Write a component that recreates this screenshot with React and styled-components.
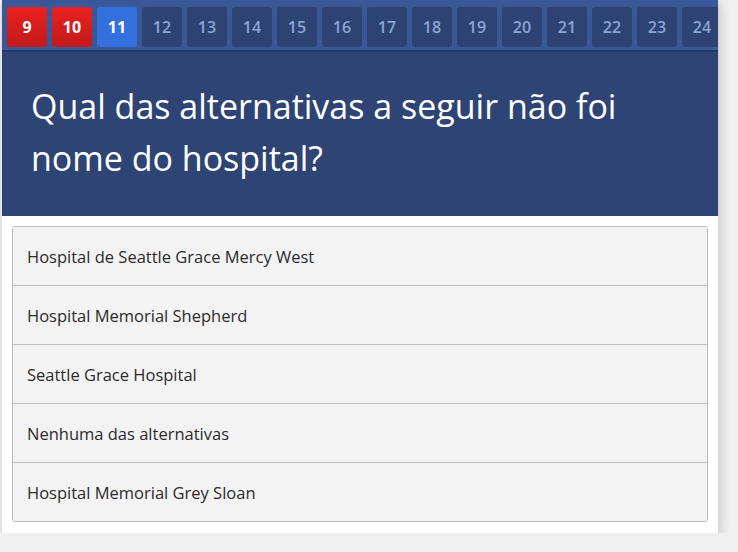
import React from 'react';
import styled, { createGlobalStyle } from 'styled-components';

const GlobalStyle = createGlobalStyle`
	body {
		margin: 0;
		background: #efefef;
		font-family: "Open Sans", "Noto Sans", sans-serif;
	}
`

const Card = styled.div`
	width: 716px;
	margin-left: 2px;
	background: #fff;
	box-shadow: 2px 3px 10px rgba(0, 0, 0, 0.18);
	padding-bottom: 11px;
	overflow: hidden;
`

const Nav = styled.div`
	display: flex;
	gap: 5px;
	padding: 7px 0 3px 5px;
	background: #3a5898;
	border-top: 2px solid #4a69a8;
	border-bottom: 2px solid #213965;
	overflow: hidden;
	margin-top: -2px;
`

const NumButton = styled.div`
	flex: 0 0 40px;
	height: 40px;
	border-radius: 3px;
	display: flex;
	align-items: center;
	justify-content: center;
	font-size: 16px;
	font-weight: ${p => (p.$state === 'todo' ? 600 : 700)};
	color: ${p => (p.$state === 'todo' ? '#8ea4d4' : '#fff')};
	background: ${p =>
		p.$state === 'wrong'
			? 'linear-gradient(#ea2020, #c21a1a)'
			: p.$state === 'current'
			? '#3570df'
			: '#2d4373'};
`

const Header = styled.div`
	background: #2e4474;
	padding: 28px 30px 32px 29px;
`

const Title = styled.h1`
	margin: 0;
	color: #fff;
	font-weight: 400;
	font-size: 34px;
	line-height: 52px;
`

const Options = styled.div`
	margin: 10px 10px 0 10px;
	border: 1px solid #bdbdbd;
	border-radius: 3px;
	overflow: hidden;
`

const Option = styled.div`
	height: 58px;
	display: flex;
	align-items: center;
	padding-left: 14px;
	background: #f3f3f3;
	color: #2b2b2b;
	font-size: 16.5px;
	& + & {
		border-top: 1px solid #bdbdbd;
	}
`

const numbers = [9, 10, 11, 12, 13, 14, 15, 16, 17, 18, 19, 20, 21, 22, 23, 24]

const stateOf = n => (n < 11 ? 'wrong' : n === 11 ? 'current' : 'todo')

const answers = [
	'Hospital de Seattle Grace Mercy West',
	'Hospital Memorial Shepherd',
	'Seattle Grace Hospital',
	'Nenhuma das alternativas',
	'Hospital Memorial Grey Sloan',
]

export default function App() {
	return (
		<>
			<GlobalStyle />
			<Card>
				<Nav>
					{numbers.map(n => (
						<NumButton key={n} $state={stateOf(n)}>{n}</NumButton>
					))}
				</Nav>
				<Header>
					<Title>Qual das alternativas a seguir não foi nome do hospital?</Title>
				</Header>
				<Options>
					{answers.map(a => (
						<Option key={a}>{a}</Option>
					))}
				</Options>
			</Card>
		</>
	)
}
